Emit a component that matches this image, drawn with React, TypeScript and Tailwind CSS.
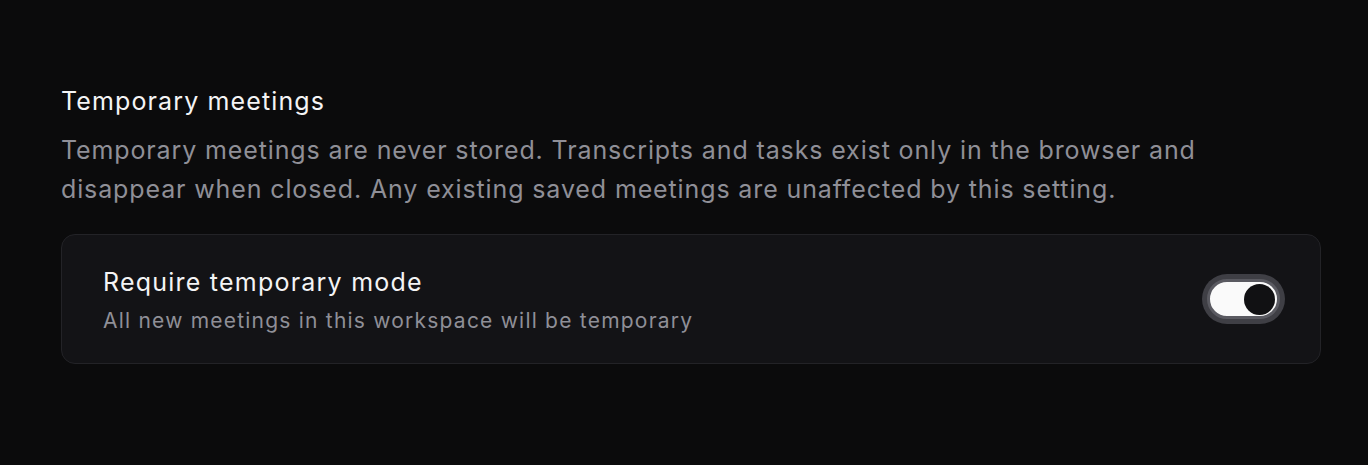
import React, { useState } from "react";

export default function App() {
  const [enabled, setEnabled] = useState<boolean>(true);

  return (
    <div
      className="min-h-[465px] w-full bg-[#0b0b0c] pt-[85px] pl-[61px]"
      style={{ fontFamily: "Inter, 'Noto Sans', sans-serif" }}
    >
      <div className="w-[1260px] flex flex-col">
        <h2 className="text-[25px] leading-[32px] tracking-[0.045em] text-[#f4f4f5] font-normal">
          Temporary meetings
        </h2>
        <p className="mt-[14px] text-[25px] leading-[39px] tracking-[0.035em] text-[#8f8f97]">
          Temporary meetings are never stored. Transcripts and tasks exist only in the browser and
          <br />
          disappear when closed. Any existing saved meetings are unaffected by this setting.
        </p>
        <div className="mt-[25px] h-[130px] rounded-[14px] border border-[#232327] bg-[#131316] flex flex-row items-center justify-between pl-[41px] pr-[40px]">
          <div className="flex flex-col gap-[9px] pt-[3px]">
            <p className="text-[25px] leading-[32px] tracking-[0.049em] text-[#f4f4f5]">
              Require temporary mode
            </p>
            <p className="text-[21px] leading-[28px] tracking-[0.058em] text-[#8f8f97]">
              All new meetings in this workspace will be temporary
            </p>
          </div>
          <button
            className={
              "w-[73px] h-[40px] rounded-full border-[3px] border-[#5a5a61] ring-[5px] ring-[#3f3f45] flex items-center px-[2px] " +
              (enabled ? "bg-[#fafafa] justify-end" : "bg-[#27272a] justify-start")
            }
            onClick={() => setEnabled(!enabled)}
          >
            <span className="w-[31px] h-[31px] rounded-full bg-[#111113] block" />
          </button>
        </div>
      </div>
    </div>
  );
}
